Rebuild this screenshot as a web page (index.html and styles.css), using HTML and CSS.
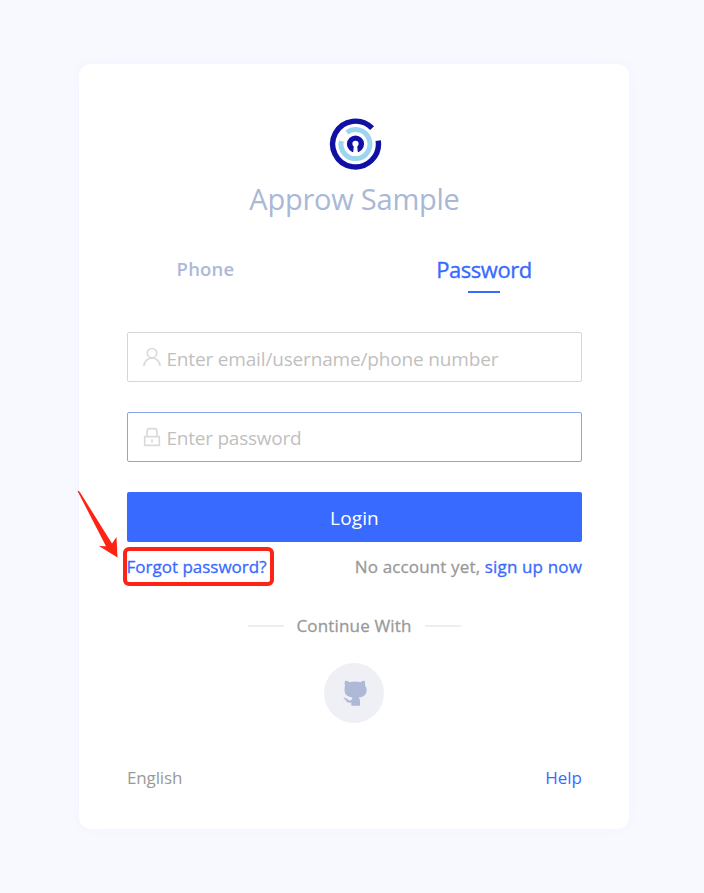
FILE: index.html
```html
<!DOCTYPE html>
<html lang="en">
<head>
<meta charset="utf-8">
<title>Approw Sample</title>
<link rel="stylesheet" href="styles.css">
</head>
<body>
<main class="card">
  <svg class="logo" viewBox="0 0 53 52" fill="none">
    <path d="M43.1 10.200A22.900 22.900 0 1 0 49.200 22.700" stroke="#1010a4" stroke-width="5.400"/>
    <path d="M17.900 14.400A14.500 14.500 0 1 1 12.300 23" stroke="#9bd5f0" stroke-width="5"/>
    <circle cx="26.500" cy="26" r="8.600" fill="#1010a4"/>
    <circle cx="26.500" cy="25.800" r="3.100" fill="#fff"/>
    <path d="M25 27h3l1 8.500h-5z" fill="#fff"/>
  </svg>
  <h1 class="title">Approw Sample</h1>
  <nav class="tabs">
    <a class="tab"><span class="phone">Phone</span></a>
    <a class="tab active"><span class="pass">Password</span></a>
  </nav>
  <form class="form">
    <div class="field">
      <svg class="icon" viewBox="0 0 18 20" fill="none" stroke="#dadada" stroke-width="1.7"><circle cx="9" cy="6.2" r="4.700"/><path d="M1 19a8 8 0 0 1 16 0"/></svg>
      <span class="hint user">Enter email/username/phone number</span>
    </div>
    <div class="field focused">
      <svg class="icon" viewBox="0 0 18 20" fill="none" stroke="#dadada" stroke-width="1.7"><path d="M1.700 9.700h14.600v8.600H1.700zM4 9.700V4.200Q4 1.700 6.500 1.700h5Q14 1.700 14 4.200v5.500M9 12.500v3"/></svg>
      <span class="hint pw">Enter password</span>
    </div>
    <div class="login"><span>Login</span></div>
  </form>
  <div class="links">
    <span class="forgot-wrap">
      <a class="forgot">Forgot password?</a>
      <span class="highlight"></span>
      <svg class="arrow" viewBox="0 0 42 70"><path d="M.5 1Q1.500 0 3 2.300L35 53.500 39.500 47 40.500 67.600 22 56 29 56.300Z" fill="#fd2315"/></svg>
    </span>
    <span class="signup">No account yet, <a>sign up now</a></span>
  </div>
  <div class="divider"><span>Continue With</span></div>
  <div class="social">
    <svg viewBox="0 0 24 26" fill="#adb9d6"><path d="M2 .8Q4.200.7 6.600 2.200Q12 .9 17.400 2.200Q19.800.7 21.700.8Q22.500 3.200 22 5.200Q24 7.700 23.600 11.200Q22.800 16.800 15.700 17.500Q17 19 17 21V25.800H8.300V22.700C1.800 23.300 4 19.700.2 18.100C3.300 16.700 4.400 20.200 6.400 20.500Q8.300 20.700 8.700 19.400L9.500 17.500Q2.200 16.700 1.600 11.200Q1.300 7.700 2 5.200Q1.300 2.800 2 .8Z"/></svg>
  </div>
  <footer class="footer"><span class="lang">English</span><a class="help">Help</a></footer>
</main>
</body>
</html>
```
FILE: styles.css
```css
* { box-sizing: border-box; }
body { margin: 0; height: 893px; padding: 64px 75px 64px 79px; background: #f8f9ff; font-family: "Open Sans", "Noto Sans", sans-serif; overflow: hidden; }
.card { width: 550px; height: 765px; padding: 54px 47px 0 48px; background: #fff; border-radius: 12px; box-shadow: 0 0 12px rgba(80, 90, 240, .045); white-space: nowrap; }
.logo { display: block; width: 53px; height: 52px; margin: 0 0 0 201.5px; }
.title { margin: 9px 0 0; height: 40px; line-height: 40px; text-align: center; font-size: 29px; font-weight: 400; letter-spacing: -.23px; color: #a9b8d6; }
.tabs { display: flex; justify-content: space-between; height: 50px; margin-top: 28px; }
.tab { width: 157px; height: 50px; text-align: center; line-height: 43px; font-size: 18.5px; font-weight: 600; letter-spacing: .2px; color: #adb9d6; }
.tab.active { width: 196px; position: relative; font-size: 22px; line-height: 44px; font-weight: 400; letter-spacing: -.45px; -webkit-text-stroke: .35px; color: #396aff; }
.tab.active::after { content: ""; position: absolute; left: 82px; top: 44px; width: 32px; height: 2px; background: #396aff; }
.form { margin: 35px 0 0; }
.field { display: flex; align-items: center; height: 50px; margin-bottom: 30px; padding: 0 15px; border: 1px solid #d6d6d6; border-radius: 2px; }
.focused { border-color: #88a5ec; }
.icon { width: 18px; height: 20px; margin-right: 5.4px; }
.hint { font-size: 19px; line-height: 48px; padding-top: 3px; letter-spacing: -.16px; color: #bfbfbf; }
.pw { padding-top: 1px; letter-spacing: -.22px; }
.login { height: 50px; line-height: 53px; text-align: center; font-size: 19px; letter-spacing: .15px; color: #fff; background: #396aff; border-radius: 2px; }
.links { display: flex; justify-content: space-between; height: 50px; line-height: 50px; font-size: 17px; -webkit-text-stroke: .3px; color: #999; }
.signup { letter-spacing: .15px; }
a { color: #396aff; }
.forgot-wrap { position: relative; left: -.5px; }
.highlight { position: absolute; left: -4px; top: 5px; width: 151px; height: 39px; border: 4px solid #fd2315; border-radius: 6px; }
.arrow { position: absolute; left: -49.5px; top: -52px; width: 42px; height: 70px; }
.divider { display: flex; align-items: center; justify-content: center; height: 28px; margin: 20px 1px 0 0; font-size: 17px; -webkit-text-stroke: .3px; letter-spacing: .15px; color: #999; }
.divider::before, .divider::after { content: ""; width: 36px; height: 2px; background: #eee; }
.divider span { width: 141px; text-align: center; line-height: 28px; }
.social { display: flex; align-items: center; justify-content: center; width: 60px; height: 60px; margin: 23px 0 0 197px; border-radius: 50%; background: #eff0f6; }
.social svg { width: 24px; height: 26px; margin-left: 1px; }
.footer { display: flex; justify-content: space-between; margin-top: 40px; line-height: 30px; font-size: 17px; color: #999; }
.lang { letter-spacing: -.15px; }
```
